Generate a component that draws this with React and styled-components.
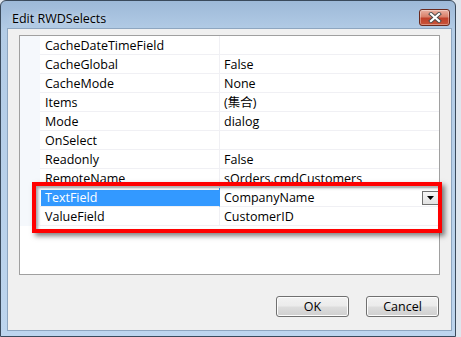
import React from "react";
import styled, { createGlobalStyle } from "styled-components";

const Global = createGlobalStyle`
  html, body { margin: 0; padding: 0; background: #dfe6ee; }
  body { font-family: "Open Sans", "Noto Sans CJK TC", sans-serif; }
`;

const Window = styled.div`
  position: relative;
  width: 456px;
  height: 337px;
  box-sizing: border-box;
  border: 1px solid #3a4a5c;
  border-radius: 6px 6px 0 0;
  background: linear-gradient(180deg, #9db9d8 0px, #b3cce6 30px, #bdd5ee 100%);
  display: flex;
  flex-direction: column;
  padding: 0 3px 5px 6px;
`;

const TitleBar = styled.div`
  height: 27px;
  display: flex;
  align-items: center;
  justify-content: space-between;
  padding-left: 5px;
  padding-right: 2px;
`;

const Title = styled.span`
  font-size: 12.5px;
  color: #000;
  text-shadow: 0 0 6px rgba(255, 255, 255, 0.8);
  margin-top: 7px;
`;

const CloseButton = styled.div`
  width: 29px;
  height: 15px;
  margin-top: 6px;
  border: 1px solid #6b2a1e;
  border-radius: 3px;
  background: linear-gradient(180deg, #eab1a2 0%, #d9806a 45%, #c0402a 55%, #c9553a 100%);
  box-shadow: inset 0 0 0 1px rgba(255, 255, 255, 0.35);
  display: flex;
  align-items: center;
  justify-content: center;
`;

const Client = styled.div`
  flex: 1;
  background: #f0f0f0;
  border: 1px solid #8ea6c0;
  display: flex;
  flex-direction: column;
  padding: 6px 11px 0 11px;
`;

const Grid = styled.div`
  position: relative;
  height: 240px;
  box-sizing: border-box;
  border: 1px solid #a0a0a0;
  background: #fff;
  display: grid;
  grid-template-columns: 20px 180px 1fr;
  grid-auto-rows: 19px;
  align-content: start;
`;

const Gutter = styled.div`
  background: #f5f8fc;
`;

const NameCell = styled.div`
  box-sizing: border-box;
  border-bottom: 1px solid #f0f0f4;
  border-right: 1px solid #f0f0f4;
  padding: ${(p) => (p.$selected ? "2px 0 0 1px" : "1px 0 0 0")};
  font-size: 12.5px;
  line-height: 17px;
  color: ${(p) => (p.$selected ? "#fff" : "#000")};
  background: ${(p) => (p.$selected ? "#3399ff" : "transparent")};
  background-clip: content-box;
  white-space: nowrap;
  overflow: hidden;
  & > span {
    display: block;
    padding-left: ${(p) => (p.$selected ? "4px" : "5px")};
    margin-top: ${(p) => (p.$selected ? "-1px" : "0")};
  }
`;

const ValueCell = styled.div`
  box-sizing: border-box;
  border-bottom: 1px solid #f0f0f4;
  border-left: ${(p) => (p.$selected ? "1px solid #3399ff" : "0")};
  margin-left: ${(p) => (p.$selected ? "-1px" : "0")};
  padding: 1px 0 0 4px;
  font-size: 12.5px;
  line-height: 17px;
  color: #000;
  display: flex;
  align-items: center;
  justify-content: space-between;
  white-space: nowrap;
`;

const DropButton = styled.div`
  width: 15px;
  height: 12px;
  margin-top: 1px;
  border: 1px solid #6f6f6f;
  background: linear-gradient(180deg, #f6f6f6, #e2e2e2);
  display: flex;
  align-items: center;
  justify-content: center;
`;

const Highlight = styled.div`
  position: absolute;
  left: 12px;
  top: 146px;
  width: 410px;
  height: 51px;
  box-sizing: border-box;
  border: 4px solid #ff0000;
  box-shadow: 3px 3px 5px rgba(0, 0, 0, 0.5), inset 2px 2px 3px rgba(0, 0, 0, 0.35);
  pointer-events: none;
`;

const ButtonRow = styled.div`
  display: flex;
  justify-content: flex-end;
  gap: 17px;
  margin-top: 21px;
  padding-right: 1px;
`;

const Button = styled.div`
  width: 73px;
  height: 21px;
  box-sizing: border-box;
  border: 1px solid #707070;
  border-radius: 3px;
  background: linear-gradient(180deg, #f2f2f2 0%, #ebebeb 48%, #dddddd 52%, #cfcfcf 100%);
  box-shadow: inset 0 0 0 1px #fcfcfc;
  font-size: 12.5px;
  line-height: 19px;
  text-align: center;
  color: #000;
`;

const rows = [
  ["CacheDateTimeField", ""],
  ["CacheGlobal", "False"],
  ["CacheMode", "None"],
  ["Items", "(集合)"],
  ["Mode", "dialog"],
  ["OnSelect", ""],
  ["Readonly", "False"],
  ["RemoteName", "sOrders.cmdCustomers"],
  ["TextField", "CompanyName", true],
  ["ValueField", "CustomerID"],
];

export default function App() {
  return (
    <>
      <Global />
      <Window>
        <TitleBar>
          <Title>Edit RWDSelects</Title>
          <CloseButton>
            <svg width="14" height="11" viewBox="0 0 14 11">
              <path d="M3 2 L11 9 M11 2 L3 9" stroke="#4a4a4a" strokeWidth="4" strokeLinecap="square" />
              <path d="M3 2 L11 9 M11 2 L3 9" stroke="#ffffff" strokeWidth="2.2" strokeLinecap="square" />
            </svg>
          </CloseButton>
        </TitleBar>
        <Client>
          <Grid>
            {rows.map(([name, value, sel]) => (
              <React.Fragment key={name}>
                <Gutter />
                <NameCell $selected={sel}>
                  <span>{name}</span>
                </NameCell>
                <ValueCell $selected={sel}>
                  <span>{value}</span>
                  {sel && (
                    <DropButton>
                      <svg width="7" height="4" viewBox="0 0 7 4">
                        <path d="M0 0 H7 L3.5 4 Z" fill="#000" />
                      </svg>
                    </DropButton>
                  )}
                </ValueCell>
              </React.Fragment>
            ))}
            <Highlight />
          </Grid>
          <ButtonRow>
            <Button>OK</Button>
            <Button>Cancel</Button>
          </ButtonRow>
        </Client>
      </Window>
    </>
  );
}
